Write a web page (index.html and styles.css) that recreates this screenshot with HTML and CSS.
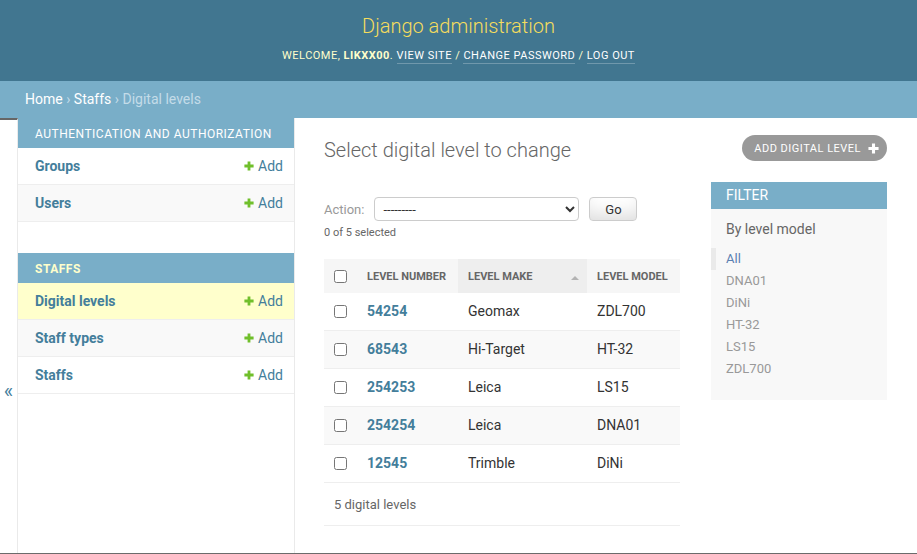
FILE: index.html
```html
<!DOCTYPE html>
<html lang="en">
<head>
<meta charset="utf-8">
<title>Select digital level to change | Django site admin</title>
<link rel="stylesheet" href="styles.css">
</head>
<body>
<div class="page">
  <header class="header">
    <div class="branding">Django administration</div>
    <div class="user-tools">Welcome, <strong>likxx00</strong>. <a href="#">View site</a> / <a href="#">Change password</a> / <a href="#">Log out</a></div>
  </header>
  <nav class="breadcrumbs"><a href="#">Home</a> › <a href="#">Staffs</a> › Digital levels</nav>
  <div class="main">
    <button class="toggle-nav" type="button">«</button>
    <aside class="nav-sidebar">
      <div class="module">
        <div class="caption">Authentication and Authorization</div>
        <div class="row"><a class="model" href="#">Groups</a><a class="addlink" href="#"><svg class="plus" viewBox="0 0 10 10"><path d="M3.6 0.4h2.8v3.2h3.2v2.8h-3.2v3.2h-2.8v-3.2h-3.2v-2.8h3.2z" fill="#70bf2b"/></svg>Add</a></div>
        <div class="row alt"><a class="model" href="#">Users</a><a class="addlink" href="#"><svg class="plus" viewBox="0 0 10 10"><path d="M3.6 0.4h2.8v3.2h3.2v2.8h-3.2v3.2h-2.8v-3.2h-3.2v-2.8h3.2z" fill="#70bf2b"/></svg>Add</a></div>
      </div>
      <div class="module current-app">
        <div class="caption">Staffs</div>
        <div class="row current"><a class="model" href="#">Digital levels</a><a class="addlink" href="#"><svg class="plus" viewBox="0 0 10 10"><path d="M3.6 0.4h2.8v3.2h3.2v2.8h-3.2v3.2h-2.8v-3.2h-3.2v-2.8h3.2z" fill="#70bf2b"/></svg>Add</a></div>
        <div class="row alt"><a class="model" href="#">Staff types</a><a class="addlink" href="#"><svg class="plus" viewBox="0 0 10 10"><path d="M3.6 0.4h2.8v3.2h3.2v2.8h-3.2v3.2h-2.8v-3.2h-3.2v-2.8h3.2z" fill="#70bf2b"/></svg>Add</a></div>
        <div class="row"><a class="model" href="#">Staffs</a><a class="addlink" href="#"><svg class="plus" viewBox="0 0 10 10"><path d="M3.6 0.4h2.8v3.2h3.2v2.8h-3.2v3.2h-2.8v-3.2h-3.2v-2.8h3.2z" fill="#70bf2b"/></svg>Add</a></div>
      </div>
    </aside>
    <div class="content">
      <div class="content-head">
        <h1>Select digital level to change</h1>
        <a class="add-btn" href="#">Add digital level<svg class="tool-plus" viewBox="0 0 10 10"><path d="M3.6 0.4h2.8v3.2h3.2v2.8h-3.2v3.2h-2.8v-3.2h-3.2v-2.8h3.2z" fill="#fff"/></svg></a>
      </div>
      <div class="changelist">
        <div class="form-container">
          <div class="actions">
            <div class="action-row">
              <label class="action-label">Action:</label>
              <select class="action-select"><option>---------</option></select>
              <button class="go-btn" type="button">Go</button>
            </div>
            <div class="counter">0 of 5 selected</div>
          </div>
          <table class="result-list">
            <colgroup><col class="c-check"><col class="c-num"><col class="c-make"><col class="c-model"></colgroup>
            <thead>
              <tr>
                <th class="check"><input type="checkbox"></th>
                <th>Level number</th>
                <th class="sorted"><div class="sort-wrap"><span>Level make</span><span class="sort-arrow"></span></div></th>
                <th>Level model</th>
              </tr>
            </thead>
            <tbody>
              <tr><td class="check"><input type="checkbox"></td><td><a class="pk" href="#">54254</a></td><td>Geomax</td><td>ZDL700</td></tr>
              <tr class="alt"><td class="check"><input type="checkbox"></td><td><a class="pk" href="#">68543</a></td><td>Hi-Target</td><td>HT-32</td></tr>
              <tr><td class="check"><input type="checkbox"></td><td><a class="pk" href="#">254253</a></td><td>Leica</td><td>LS15</td></tr>
              <tr class="alt"><td class="check"><input type="checkbox"></td><td><a class="pk" href="#">254254</a></td><td>Leica</td><td>DNA01</td></tr>
              <tr><td class="check"><input type="checkbox"></td><td><a class="pk" href="#">12545</a></td><td>Trimble</td><td>DiNi</td></tr>
            </tbody>
          </table>
          <p class="paginator">5 digital levels</p>
        </div>
        <div class="filter">
          <h2 class="filter-title">Filter</h2>
          <h3 class="filter-sub">By level model</h3>
          <ul class="filter-list">
            <li class="selected"><a href="#">All</a></li>
            <li><a href="#">DNA01</a></li>
            <li><a href="#">DiNi</a></li>
            <li><a href="#">HT-32</a></li>
            <li><a href="#">LS15</a></li>
            <li><a href="#">ZDL700</a></li>
          </ul>
        </div>
      </div>
    </div>
  </div>
</div>
</body>
</html>
```
FILE: styles.css
```css
html, body {
  margin: 0;
  padding: 0;
}
body {
  font-family: Roboto, "Liberation Sans", "DejaVu Sans", sans-serif;
  color: #333;
  background: #fff;
  font-size: 14px;
}
a {
  text-decoration: none;
}
.page {
  height: 100vh;
  display: flex;
  flex-direction: column;
  box-sizing: border-box;
  border-bottom: 1px solid #6b6b6b;
  overflow: hidden;
}

/* Header */
.header {
  background: #417690;
  height: 81px;
  box-sizing: border-box;
  padding-top: 14px;
  display: flex;
  flex-direction: column;
  align-items: center;
  flex: 0 0 auto;
}
.branding {
  font-size: 20px;
  font-weight: 300;
  line-height: 24px;
  color: #f5dd5d;
}
.user-tools {
  margin-top: 7px;
  font-size: 11px;
  line-height: 22px;
  letter-spacing: 0.5px;
  text-transform: uppercase;
  color: #ffc;
}
.user-tools strong {
  font-weight: 700;
}
.user-tools a {
  color: #fff;
  padding-bottom: 1px;
  border-bottom: 1px solid rgba(255, 255, 255, 0.25);
}

/* Breadcrumbs */
.breadcrumbs {
  background: #79aec8;
  color: #c4dce8;
  height: 37px;
  box-sizing: border-box;
  padding: 10px 25px;
  line-height: 17px;
  font-size: 14px;
  flex: 0 0 auto;
}
.breadcrumbs a {
  color: #fff;
}

/* Main */
.main {
  flex: 1 1 auto;
  display: flex;
  min-height: 0;
}
.toggle-nav {
  box-sizing: border-box;
  flex: 0 0 18px;
  width: 18px;
  border: 0;
  border-top: 2px solid #666;
  border-right: 1px solid #eaeaea;
  background: #fff;
  color: #447e9b;
  font-family: Roboto, "DejaVu Sans", sans-serif;
  font-size: 20px;
  line-height: 20px;
  padding: 261px 0 0;
  margin: 0;
  display: flex;
  justify-content: center;
  align-items: flex-start;
}
.nav-sidebar {
  flex: 0 0 276px;
  border-right: 1px solid #eaeaea;
}
.module + .module {
  margin-top: 31px;
}
.caption {
  background: #79aec8;
  color: #fff;
  font-size: 12px;
  line-height: 16px;
  padding: 8px 16px 6px 17px;
  letter-spacing: 0.5px;
  text-transform: uppercase;
  font-weight: 400;
}
.current-app .caption {
  color: #ffc;
  font-weight: 700;
}
.row {
  display: flex;
  justify-content: space-between;
  align-items: center;
  padding: 8px 11px 8px 17px;
  line-height: 20px;
  border-bottom: 1px solid #eee;
  background: #fff;
}
.row.alt {
  background: #f9f9f9;
}
.row.current {
  background: #ffc;
}
.model {
  color: #447e9b;
  font-weight: 700;
  font-size: 14px;
}
.addlink {
  color: #447e9b;
  font-size: 14px;
  display: flex;
  align-items: center;
}
.plus {
  width: 10px;
  height: 10px;
  margin-right: 4px;
}

/* Content */
.content {
  flex: 1 1 auto;
  padding: 17px 30px 0 29px;
  min-width: 0;
}
.content-head {
  display: flex;
  justify-content: space-between;
  align-items: flex-start;
}
.content-head h1 {
  margin: 3px 0 20px;
  font-size: 20px;
  font-weight: 300;
  line-height: 24px;
  color: #666;
}
.add-btn {
  display: flex;
  align-items: center;
  height: 26px;
  box-sizing: border-box;
  padding: 0 8px 0 12px;
  background: #999;
  color: #fff;
  border-radius: 13px;
  font-size: 11px;
  letter-spacing: 0.5px;
  text-transform: uppercase;
}
.tool-plus {
  width: 11px;
  height: 11px;
  margin-left: 7px;
}

.changelist {
  display: flex;
  align-items: flex-start;
}
.form-container {
  flex: 1 1 auto;
  min-width: 0;
}
.actions {
  padding: 15px 0 17px;
}
.action-row {
  display: flex;
  align-items: center;
  height: 24px;
}
.action-label {
  font-size: 13px;
  color: #999;
}
.action-select {
  margin-left: 10px;
  width: 205px;
  height: 24px;
  border: 1px solid #ccc;
  border-radius: 4px;
  background: #fff;
  font-family: Roboto, "Liberation Sans", sans-serif;
  font-size: 13px;
  color: #333;
  padding: 0 4px;
}
.go-btn {
  margin-left: 10px;
  width: 48px;
  height: 24px;
  border: 1px solid #ccc;
  border-radius: 4px;
  background: #fff;
  box-shadow: 0 -15px 20px -10px rgba(0, 0, 0, 0.15) inset;
  font-family: Roboto, "Liberation Sans", sans-serif;
  font-size: 13px;
  color: #333;
  padding: 0;
}
.counter {
  margin-top: 3px;
  font-size: 11px;
  line-height: 18px;
  color: #666;
}

.result-list {
  width: 100%;
  border-collapse: separate;
  border-spacing: 0;
  table-layout: fixed;
}
.c-check { width: 33px; }
.c-num { width: 101px; }
.c-make { width: 129px; }
.c-model { width: 93px; }
.result-list th {
  background: #f6f6f6;
  color: #666;
  font-size: 11px;
  font-weight: 700;
  text-transform: uppercase;
  text-align: left;
  line-height: 32px;
  padding: 2px 10px 0;
  white-space: nowrap;
}
.result-list th.sorted {
  background: #eee;
  padding-right: 8px;
}
.sort-wrap {
  display: flex;
  justify-content: space-between;
  align-items: center;
}
.sort-arrow {
  width: 0;
  height: 0;
  border-left: 4px solid transparent;
  border-right: 4px solid transparent;
  border-bottom: 4px solid #b3b3b3;
  margin-top: 2px;
}
.result-list td {
  padding: 8px 10px;
  line-height: 21px;
  font-size: 14px;
  color: #333;
  border-bottom: 1px solid #eee;
  background: #fff;
  white-space: nowrap;
}
.result-list tr.alt td {
  background: #f9f9f9;
}
.result-list .check input {
  margin: 0;
  width: 13px;
  height: 13px;
  vertical-align: middle;
  position: relative;
  top: -1px;
}
.pk {
  color: #447e9b;
  font-weight: 700;
}
.paginator {
  margin: 0;
  padding: 11px 10px 9px;
  font-size: 13px;
  line-height: 22px;
  color: #666;
  border-bottom: 1px solid #eee;
}

/* Filter */
.filter {
  flex: 0 0 176px;
  margin-left: 31px;
  background: #f8f8f8;
}
.filter-title {
  margin: 0 0 12px;
  background: #79aec8;
  color: #fff;
  font-size: 14px;
  font-weight: 400;
  line-height: 17px;
  padding: 5px 15px;
  text-transform: uppercase;
}
.filter-sub {
  margin: 0 0 10px;
  padding: 0 15px;
  font-size: 14px;
  font-weight: 400;
  line-height: 17px;
  color: #666;
}
.filter-list {
  list-style: none;
  margin: 0;
  padding: 0 15px 20px;
}
.filter-list li {
  font-size: 13px;
  line-height: 22px;
}
.filter-list a {
  color: #999;
}
.filter-list li.selected {
  border-left: 5px solid #eaeaea;
  padding-left: 10px;
  margin-left: -15px;
}
.filter-list li.selected a {
  color: #5b80b2;
}
```
